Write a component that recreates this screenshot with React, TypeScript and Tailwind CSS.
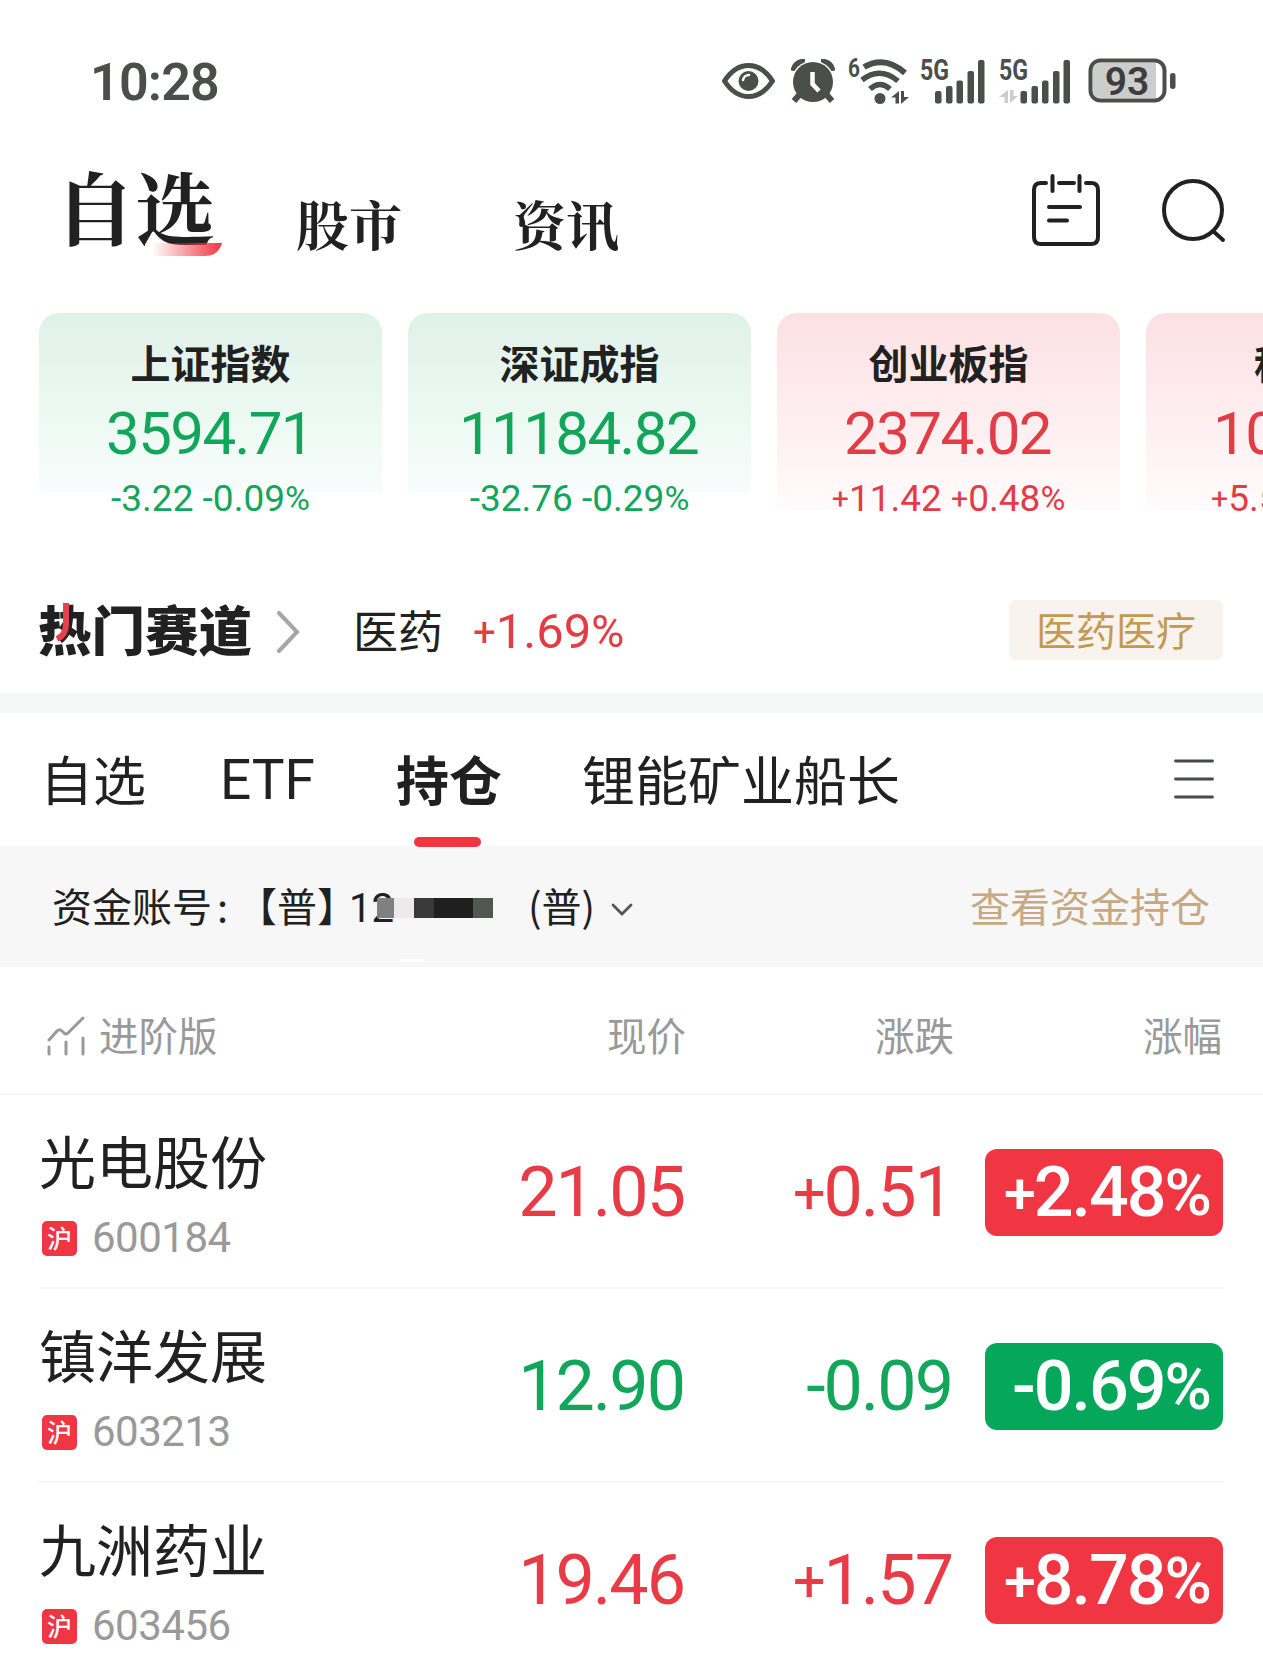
import clsx from 'clsx';

const indices = [
  { name: '上证指数', value: '3594.71', change: '-3.22 -0.09%', up: false },
  { name: '深证成指', value: '11184.82', change: '-32.76 -0.29%', up: false },
  { name: '创业板指', value: '2374.02', change: '+11.42 +0.48%', up: true },
  { name: '科创50', value: '1010.57', change: '+5.58 +0.55%', up: true },
];

const stocks = [
  { name: '光电股份', code: '600184', price: '21.05', change: '+0.51', percent: '+2.48%', up: true },
  { name: '镇洋发展', code: '603213', price: '12.90', change: '-0.09', percent: '-0.69%', up: false },
  { name: '九洲药业', code: '603456', price: '19.46', change: '+1.57', percent: '+8.78%', up: true },
];

// Signs and percent marks are set a little smaller than the digits
function Figure({ text }: { text: string }) {
  return (
    <span className="whitespace-pre">
      {text.split(/([+%])/).map((part, i) => {
        if (part === '+') return <span key={i} className="relative -top-[0.06em] text-[0.82em]">+</span>;
        if (part === '%') return <span key={i} className="relative -top-[0.02em] text-[0.92em]">%</span>;
        return part;
      })}
    </span>
  );
}

function SignalBars() {
  return (
    <>
      <rect x="15" y="32" width="6.5" height="12.500" rx="2" />
      <rect x="26" y="27" width="6.5" height="17.500" rx="2" />
      <rect x="36.500" y="21.500" width="6.5" height="23" rx="2" />
      <rect x="47.500" y="12" width="6.5" height="32.500" rx="2" />
      <rect x="58" y="1" width="6.5" height="43.500" rx="2" />
    </>
  );
}

function StatusBar() {
  return (
    <div className="flex h-[140px] items-center pt-[22px] pl-[90px] text-[#4a4f4c]">
      <span className="mt-[3px] w-[632px] font-[Roboto] text-[52px] leading-none font-semibold tracking-[-0.8px]">10:28</span>
      <svg className="h-[36px] w-[53px]" viewBox="0 0 53 36" fill="none">
        <path d="M2.500 18C9 8 17 2.500 26.500 2.500S44 8 50.500 18C44 28 36 33.500 26.500 33.500S9 28 2.500 18Z" stroke="currentColor" strokeWidth="5" strokeLinejoin="round" />
        <circle cx="26.500" cy="18" r="10" fill="currentColor" />
        <path d="M21 17a6 6 0 0 1 6-5" stroke="white" strokeWidth="2.500" strokeLinecap="round" />
      </svg>
      <svg className="ml-[16px] h-[44px] w-[44px]" viewBox="0 0 44 44" fill="none">
        <path d="M2.500 12Q4 3 14 2.500M41.500 12Q40 3 30 2.500" stroke="currentColor" strokeWidth="6" />
        <circle cx="22" cy="23" r="21.500" fill="white" />
        <path d="M9 35l-6 7M35 35l6 7" stroke="currentColor" strokeWidth="6" />
        <circle cx="22" cy="23" r="20" fill="currentColor" />
        <path d="M21.500 13v12l6.500 7" stroke="white" strokeWidth="4.500" />
      </svg>
      <svg className="ml-[13px] h-[48px] w-[62px] overflow-visible" viewBox="0 0 62 48" fill="none">
        <text x="0" y="20" fontFamily="Roboto" fontSize="26" fontWeight="700" fill="currentColor" textLength="12" lengthAdjust="spacingAndGlyphs">6</text>
        <path d="M16 10Q37-2 57 16" stroke="currentColor" strokeWidth="6" />
        <path d="M14 23Q32 9 50 24" stroke="currentColor" strokeWidth="5.500" />
        <path d="M22 32Q32 23 42 32" stroke="currentColor" strokeWidth="5.500" />
        <circle cx="32" cy="41.500" r="5.500" fill="currentColor" />
        <path d="M51 34v12.500h-3.500v-6H43zM53 47V34h3v6h5z" fill="currentColor" />
      </svg>
      <svg className="mt-[1px] ml-[10px] h-[46px] w-[67px] overflow-visible" viewBox="0 0 67 46" fill="currentColor">
        <text x="0" y="21" fontFamily="Roboto" fontSize="29" fontWeight="700" textLength="29" lengthAdjust="spacingAndGlyphs">5G</text>
        <SignalBars />
      </svg>
      <svg className="mt-[1px] ml-[12px] h-[46px] w-[74px] overflow-visible" viewBox="0 0 74 46" fill="currentColor">
        <text x="0" y="21" fontFamily="Roboto" fontSize="29" fontWeight="700" textLength="29" lengthAdjust="spacingAndGlyphs">5G</text>
        <path d="M9 31v13H5.500v-6H0zM11 44V31h3.500v6H19z" fill="#cfcacc" />
        <g transform="translate(6.500)">
          <SignalBars />
        </g>
      </svg>
      <svg className="ml-[15px] h-[46px] w-[88px]" viewBox="0 0 88 46" fill="none">
        <rect x="2.500" y="2.500" width="74" height="40" rx="10" fill="white" stroke="currentColor" strokeWidth="4" />
        <path d="M12 5h56v35H12q-7 0-7-7V12q0-7 7-7Z" fill="#cdcdcd" />
        <rect x="82" y="15" width="5.500" height="16" rx="2.700" fill="currentColor" />
        <text x="39" y="36.500" textAnchor="middle" fontFamily="Roboto" fontSize="39" fontWeight="600" fill="#3b3e3c">93</text>
      </svg>
    </div>
  );
}

function Header() {
  return (
    <header className="flex h-[173px] items-start pl-[55px] font-['Noto_Serif_CJK_SC','Noto_Sans_CJK_SC',serif] text-[#212121]">
      <div className="relative mt-[25px] w-[241px] text-[80px] leading-none font-bold">
        自选
        <svg className="absolute top-[78px] left-[97px] h-[13px] w-[70px]" viewBox="0 0 70 13">
          <defs>
            <linearGradient id="swoosh">
              <stop offset="0" stopColor="#f03643" stopOpacity="0" />
              <stop offset="1" stopColor="#f03643" />
            </linearGradient>
          </defs>
          <path d="M0 0h70q-4 13-17 13H0Z" fill="url(#swoosh)" />
        </svg>
      </div>
      <span className="mt-[57px] w-[217px] text-[53px] leading-none font-bold">股市</span>
      <span className="mt-[57px] w-[518px] text-[53px] leading-none font-bold">资讯</span>
      <svg className="mt-[33px] h-[74px] w-[70px] shrink-0" viewBox="0 0 70 74" fill="none" stroke="currentColor" strokeWidth="4" strokeLinecap="round">
        <path d="M15 10H10Q3 10 3 17V64q0 7 7 7H60q7 0 7-7V17q0-7-7-7H55M28 10H43M21.500 3V18M48.500 3V18M18 34H49M18 47.500H36" />
      </svg>
      <svg className="mt-[38px] ml-[60px] h-[66px] w-[66px] shrink-0" viewBox="0 0 66 66" fill="none" stroke="currentColor" strokeWidth="4" strokeLinecap="round">
        <circle cx="32" cy="32" r="29" />
        <path d="M52 53l10 9" />
      </svg>
    </header>
  );
}

function IndexCards() {
  return (
    <section className="flex h-[267px] items-start gap-[26px] overflow-hidden pl-[39px]">
      {indices.map((item) => (
        <div
          key={item.name}
          className={clsx(
            'flex w-[343px] shrink-0 flex-col items-center rounded-t-[20px] bg-linear-to-b whitespace-nowrap',
            item.up
              ? 'h-[197px] from-[#fbe0e3] via-[#feedef] to-[#fffbfc] text-[#e23c46]'
              : 'h-[179px] from-[#dff1e9] via-[#eaf8f1] to-[#f7fdfc] text-[#12a65b]',
          )}
        >
          <span className="mt-[29px] text-[40px] leading-[40px] font-bold text-[#212121]">{item.name}</span>
          <span className="mt-[22px] mr-[2px] font-[Roboto] text-[60px] leading-[60px] tracking-[-1.6px]">{item.value}</span>
          <span className="mt-[16px] font-[Roboto] text-[37px] leading-[37px]">
            <Figure text={item.change} />
          </span>
        </div>
      ))}
    </section>
  );
}

function HotTrack() {
  return (
    <section className="flex h-[133px] items-center border-b-[20px] border-[#f6f7f7] pl-[38px]">
      <div className="relative mb-[17px] w-[239px] text-[53.500px] leading-none font-black text-[#212121]">
        热门赛道
        <svg className="absolute top-[2px] left-[16px] h-[40px] w-[18px]" viewBox="0 0 18 40" fill="none">
          <path d="M12 0V21Q12 32 3 36" stroke="#e8404a" strokeWidth="6" />
        </svg>
      </div>
      <svg className="mb-[10px] h-[42px] w-[24px]" viewBox="0 0 24 42" fill="none" stroke="#a5a5a5" strokeWidth="4" strokeLinecap="round">
        <path d="M2 2l18 19L2 40" />
      </svg>
      <span className="mb-[15px] ml-[52px] text-[45px] leading-none text-[#212121]">医药</span>
      <span className="mb-[10px] ml-[30px] font-[Roboto] text-[49px] leading-none text-[#e23c46]">
        <Figure text="+1.69%" />
      </span>
      <span className="mr-[40px] mb-[13px] ml-auto flex h-[60px] w-[214px] items-center justify-center rounded-md bg-[#f8f3ef] pb-[3px] text-[40px] leading-none text-[#c49a50]">医药医疗</span>
    </section>
  );
}

function Tabs() {
  return (
    <nav className="flex h-[133px] items-center pb-[3px] pl-[40px] text-[53px] leading-none text-[#212121]">
      <span className="w-[180px]">自选</span>
      <span className="mt-[4px] w-[176px] font-[Roboto] text-[55px]">ETF</span>
      <span className="relative w-[186px] font-bold">
        持仓
        <i className="absolute top-[85px] left-[18px] h-[10px] w-[67px] rounded-full bg-[#f03643]" />
      </span>
      <span>锂能矿业船长</span>
      <svg className="mt-[2px] mr-[49px] ml-auto h-[42px] w-[40px]" viewBox="0 0 40 42" stroke="#444b48" strokeWidth="2.800" strokeLinecap="round">
        <path d="M1.500 3h37M1.500 21h37M1.500 39h37" />
      </svg>
    </nav>
  );
}

function AccountBar() {
  return (
    <section className="flex h-[121px] items-center bg-[#f7f7f7] pb-[4px] pl-[52px] text-[40px] leading-none text-[#212121]">
      <span className="w-[165px]">资金账号</span>
      <span className="w-[40px]">:</span>
      <span className="w-[92px] whitespace-nowrap [font-feature-settings:'halt']">【普】</span>
      <span className="relative mt-[9px] w-[179px] font-[Roboto]">
        12
        {/* masked account digits */}
        <span className="absolute top-[9px] left-[28px] flex h-[20px]">
          <i className="w-[17px] bg-[#7e8180]" />
          <i className="w-[20px] bg-[#eee9ea]" />
          <i className="w-[20px] bg-[#393939]" />
          <i className="w-[39px] bg-[#1f1f1f]" />
          <i className="w-[20px] bg-[#515752]" />
          <i className="absolute top-[61px] left-[22px] h-[3px] w-[26px] rounded-b-full bg-white" />
        </span>
      </span>
      <span>(普)</span>
      <svg className="mt-[10px] ml-[16px] h-[14px] w-[22px]" viewBox="0 0 22 14" fill="none" stroke="#555" strokeWidth="2.800" strokeLinecap="round">
        <path d="M2 2l9 9 9-9" />
      </svg>
      <span className="mr-[53px] ml-auto text-[#c6a883]">查看资金持仓</span>
    </section>
  );
}

function StockTable() {
  return (
    <section>
      <div className="flex h-[128px] items-center border-b-2 border-[#f5f5f5] pt-[7px] pl-[46px] text-[39.500px] leading-none text-[#999]">
        <svg className="mt-[5px] mr-[13px] h-[40px] w-[40px]" viewBox="0 0 40 40" fill="none" stroke="currentColor" strokeWidth="3" strokeLinecap="round" strokeLinejoin="round">
          <path d="M3 24L11 15q2.500-2.500 5 0l2 2q2 2 4 0L37 2M3 31v7M20 26v12M37 22v16" />
        </svg>
        <span>进阶版</span>
        <span className="ml-auto">现价</span>
        <span className="w-[268px] text-right">涨跌</span>
        <span className="mr-[41px] w-[268px] text-right">涨幅</span>
      </div>
      {stocks.map((stock) => (
        <div key={stock.code} className="mx-[39px] flex h-[194px] items-center border-b-2 border-[#f5f5f5] pt-[2px] font-[Roboto] text-[70px] leading-none">
          <div className="w-[300px] self-start">
            <div className="mt-[34px] font-['Noto_Sans_CJK_SC',sans-serif] text-[57px] leading-[57px] text-[#212121]">{stock.name}</div>
            <div className="mt-[29px] flex items-center pl-[3px]">
              <span className="flex h-[35px] w-[35px] items-center justify-center rounded-[5px] bg-[#f03643] pb-[2px] font-['Noto_Sans_CJK_SC',sans-serif] text-[25px] font-medium text-white">沪</span>
              <span className="ml-[15px] text-[42px] leading-[42px] tracking-[-0.5px] text-[#999]">{stock.code}</span>
            </div>
          </div>
          <span className={clsx('w-[345px] text-right tracking-[-2px]', stock.up ? 'text-[#e93b45]' : 'text-[#12a65b]')}>{stock.price}</span>
          <span className={clsx('w-[268px] text-right tracking-[-2px]', stock.up ? 'text-[#e93b45]' : 'text-[#12a65b]')}>
            <Figure text={stock.change} />
          </span>
          <span className={clsx('mr-[1px] ml-auto flex h-[87px] w-[238px] items-center justify-end rounded-xl pr-[13px] font-medium tracking-[-2px] text-white', stock.up ? 'bg-[#f03643]' : 'bg-[#05a85a]')}>
            <Figure text={stock.percent} />
          </span>
        </div>
      ))}
    </section>
  );
}

export default function App() {
  return (
    <main className="h-[1672px] w-[1263px] overflow-hidden bg-white font-['Noto_Sans_CJK_SC',sans-serif]">
      <StatusBar />
      <Header />
      <IndexCards />
      <HotTrack />
      <Tabs />
      <AccountBar />
      <StockTable />
    </main>
  );
}
